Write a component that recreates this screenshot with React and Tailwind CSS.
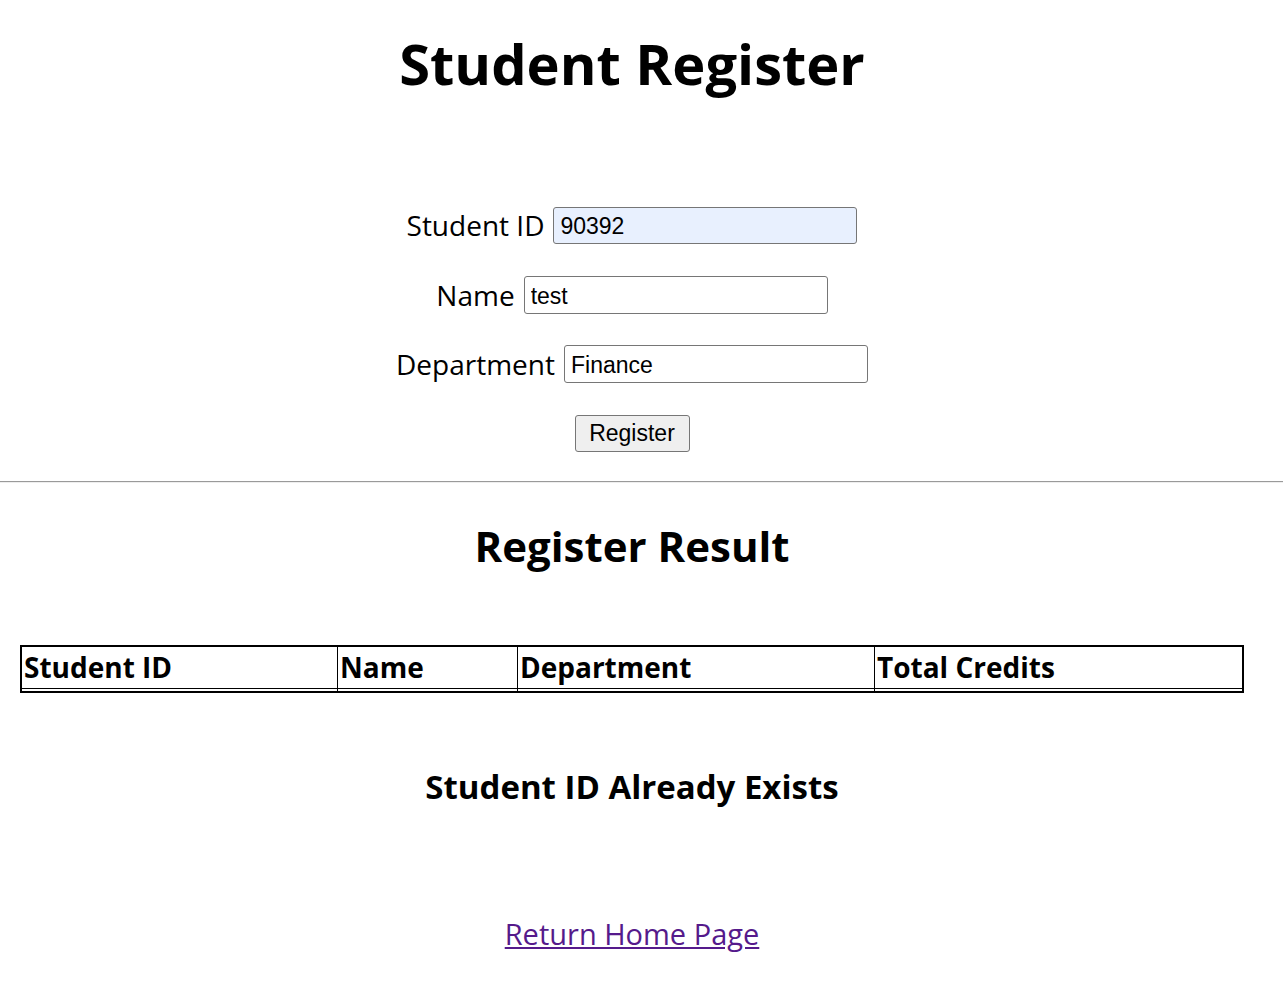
export default function App() {
  return (
    <div className="min-h-screen bg-white text-black" style={{ fontFamily: '"Open Sans", "Noto Sans", sans-serif' }}>
      <div className="w-[1264px]">
        <h1 className="pt-[23px] text-center text-[56px] font-bold leading-[80px]">Student Register</h1>

        <form className="mt-[104px] flex flex-col items-center">
          <div className="flex items-center gap-[9px]">
            <label className="text-[28px] leading-[37px]">Student ID</label>
            <input
              type="text"
              defaultValue="90392"
              className="h-[37px] w-[304px] rounded-[3px] border border-[#767676] bg-[#e8f0fe] px-[6px] pt-[2px] text-[23px] outline-none"
              style={{ fontFamily: '"Liberation Sans", Arial, sans-serif' }}
            />
          </div>
          <div className="mt-[32px] flex items-center gap-[9px]">
            <label className="text-[28px] leading-[37px]">Name</label>
            <input
              type="text"
              defaultValue="test"
              className="h-[38px] w-[304px] rounded-[3px] border border-[#767676] bg-white px-[6px] pt-[2px] text-[23px] outline-none"
              style={{ fontFamily: '"Liberation Sans", Arial, sans-serif' }}
            />
          </div>
          <div className="mt-[31px] flex items-center gap-[9px]">
            <label className="text-[28px] leading-[37px]">Department</label>
            <input
              type="text"
              defaultValue="Finance"
              className="h-[38px] w-[304px] rounded-[3px] border border-[#767676] bg-white px-[6px] pt-[2px] text-[23px] outline-none"
              style={{ fontFamily: '"Liberation Sans", Arial, sans-serif' }}
            />
          </div>
          <button
            type="button"
            className="mt-[32px] h-[37px] w-[115px] rounded-[3px] border border-[#767676] bg-[#efefef] text-[23px]"
            style={{ fontFamily: '"Liberation Sans", Arial, sans-serif' }}
          >
            Register
          </button>
        </form>
      </div>

      <hr className="mt-[29px] border-0 border-t border-b border-t-[#9a9a9a] border-b-[#eeeeee]" />

      <div className="w-[1264px]">
        <h2 className="mt-[35px] text-center text-[42px] font-bold leading-[56px]">Register Result</h2>

        <table className="mx-[20px] mt-[71px] w-[1224px] border-separate border-spacing-0 border-2 border-black">
          <thead>
            <tr className="text-left text-[28px] font-bold">
              <th className="w-[316px] border-b border-r border-black px-[2px] py-0 leading-[41px]">Student ID</th>
              <th className="w-[180px] border-b border-r border-black px-[2px] py-0 leading-[41px]">Name</th>
              <th className="w-[357px] border-b border-r border-black px-[2px] py-0 leading-[41px]">Department</th>
              <th className="border-b border-black px-[2px] py-0 leading-[41px]">Total Credits</th>
            </tr>
          </thead>
          <tbody>
            <tr>
              <td className="h-[2px] border-r border-black p-0"></td>
              <td className="h-[2px] border-r border-black p-0"></td>
              <td className="h-[2px] border-r border-black p-0"></td>
              <td className="h-[2px] p-0"></td>
            </tr>
          </tbody>
        </table>

        <h3 className="mt-[72px] text-center text-[33px] font-bold leading-[44px]">Student ID Already Exists</h3>

        <div className="mt-[105px] text-center">
          <a href="#" className="text-[29px] leading-[40px] text-[#551a8b] underline">
            Return Home Page
          </a>
        </div>
      </div>
    </div>
  )
}
